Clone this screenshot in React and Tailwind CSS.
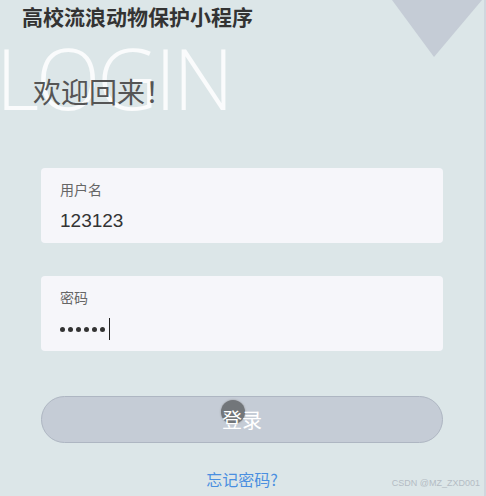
import React from 'react';

const Field = ({ label, children }) => (
  <div className="bg-[#f6f6fa] rounded-[4px] h-[75px] px-[19px] pt-[11px]">
    <div className="text-[14px] text-[#666] leading-[20px]">{label}</div>
    <div className="mt-[10px] h-[24px] flex items-center">{children}</div>
  </div>
);

const App = () => {
  return (
    <div
      className="relative w-[486px] h-[496px] overflow-hidden bg-[#dce6e8] border-r-2 border-[#d0d7de]"
      style={{ fontFamily: '"Noto Sans CJK SC", "Liberation Sans", sans-serif' }}
    >
      {/* corner triangle */}
      <svg className="absolute top-0 right-[2px]" width="98" height="58" viewBox="0 0 98 58">
        <polygon points="8,0 98,0 50,57" fill="#c5ccd6" />
      </svg>

      <div className="relative px-[22px] pt-[1px] text-[21px] font-bold text-[#333] leading-[30px]">
        高校流浪动物保护小程序
      </div>

      {/* welcome */}
      <div className="relative h-[137px]">
        <div
          className="absolute left-[-4px] top-[5px] text-[84px] font-light text-white/85 leading-none tracking-[-3px]"
          style={{ fontFamily: '"Open Sans", sans-serif' }}
        >
          LOGIN
        </div>
        <div className="relative pl-[33px] pt-[43px] text-[28px] text-[#555] leading-[34px]">
          欢迎回来！
        </div>
      </div>

      <div className="px-[41px] flex flex-col">
        <Field label="用户名">
          <span className="text-[19px] text-[#333]" style={{ fontFamily: '"Liberation Sans", sans-serif' }}>123123</span>
        </Field>

        <div className="h-[33px]" />

        <Field label="密码">
          <div className="flex items-center gap-[3px]">
            {[0, 1, 2, 3, 4, 5].map(i => (
              <span key={i} className="w-[5px] h-[5px] rounded-full bg-[#333]" />
            ))}
            <span className="ml-[1px] w-[1px] h-[22px] bg-[#222]" />
          </div>
        </Field>

        <button className="relative mt-[45px] h-[47px] rounded-full bg-[#c5ccd6] border border-[#aeb6c2] text-white text-[20px] flex items-center justify-center">
          <span className="absolute left-[179px] top-[3px] w-[24px] h-[24px] rounded-full bg-[#6a6d71] opacity-90 shadow-[0_0_2px_#888]" />
          <span className="relative">登录</span>
        </button>

        <div className="mt-[24px] text-center text-[16px] text-[#4a8fe0] leading-[24px]">忘记密码?</div>
      </div>

      <div
        className="absolute right-[4px] bottom-[6px] text-[9px] text-[#b4bcc4]"
        style={{ fontFamily: '"Liberation Sans", sans-serif' }}
      >
        CSDN @MZ_ZXD001
      </div>
    </div>
  );
};

export default App;
